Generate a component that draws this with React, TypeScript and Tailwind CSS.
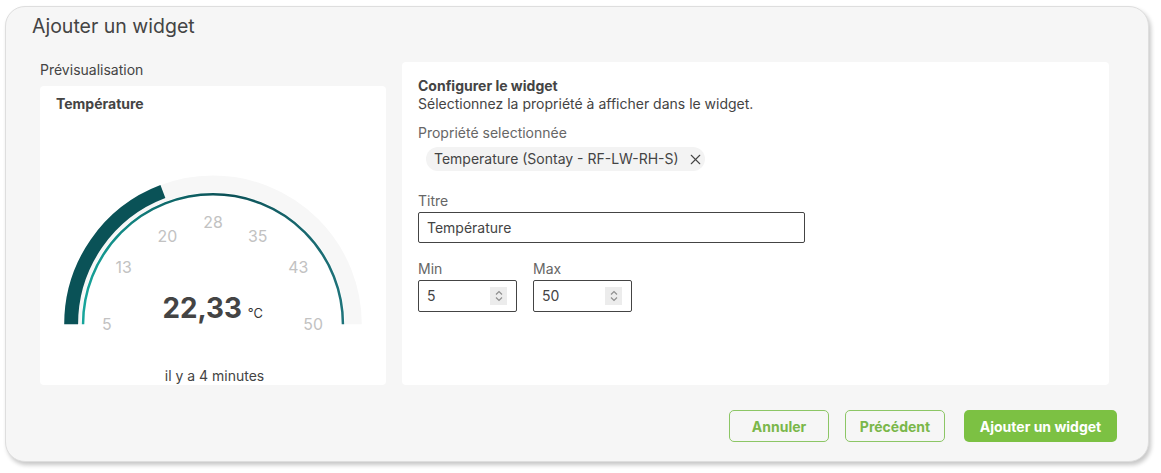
import { X } from 'lucide-react';

const MIN = 5;
const MAX = 50;
const VALUE = 22.33;

// gauge centre in svg coordinates
const CX = 173;
const CY = 213;

function arcPath(r: number, fromDeg: number, toDeg: number) {
  const a0 = (fromDeg * Math.PI) / 180;
  const a1 = (toDeg * Math.PI) / 180;
  const x0 = CX + r * Math.cos(a0);
  const y0 = CY - r * Math.sin(a0);
  const x1 = CX + r * Math.cos(a1);
  const y1 = CY - r * Math.sin(a1);
  const large = Math.abs(fromDeg - toDeg) > 180 ? 1 : 0;
  return `M ${x0} ${y0} A ${r} ${r} 0 ${large} 1 ${x1} ${y1}`;
}

const ticks = [
  { v: '5', x: 66, y: 213 },
  { v: '13', x: 83, y: 156 },
  { v: '20', x: 127, y: 124 },
  { v: '28', x: 173, y: 110 },
  { v: '35', x: 218, y: 124 },
  { v: '43', x: 259, y: 156 },
  { v: '50', x: 274, y: 213 },
];

function Gauge() {
  const frac = (VALUE - MIN) / (MAX - MIN);
  const end = 180 - frac * 180;
  return (
    <svg width={346} height={250} viewBox="0 0 346 250" className="block">
      <defs>
        <linearGradient id="thin" gradientUnits="userSpaceOnUse" x1="40" y1="0" x2="306" y2="0">
          <stop offset="0" stopColor="#17a69c" />
          <stop offset="0.3" stopColor="#0f6d6e" />
          <stop offset="0.55" stopColor="#0b5056" />
          <stop offset="1" stopColor="#1f747b" />
        </linearGradient>
      </defs>
      <path d={arcPath(141.5, 180, 0)} fill="none" stroke="#f7f7f7" strokeWidth={17} />
      <path d={arcPath(143, 180, end)} fill="none" stroke="#0a5257" strokeWidth={14} />
      <path d={arcPath(131, 180, 0)} fill="none" stroke="url(#thin)" strokeWidth={2.5} />
      {ticks.map((t) => (
        <text
          key={t.v}
          x={t.x}
          y={t.y}
          textAnchor="middle"
          dominantBaseline="central"
          fill="#c2c2c2"
          fontSize={16}
          fontFamily="Inter, sans-serif"
        >
          {t.v}
        </text>
      ))}
      <text x={122} y={207} fill="#444" fontSize={28} fontWeight={700} fontFamily="Inter, sans-serif">
        22,33
      </text>
      <text x={208} y={207} fill="#333" fontSize={13} fontFamily="Inter, sans-serif">
        °C
      </text>
    </svg>
  );
}

function NumberInput({ value }: { value: string }) {
  return (
    <div className="flex h-[32px] w-[99px] items-center justify-between rounded-[2px] border border-[#444] pl-[8px] pr-[9px]">
      <span>{value}</span>
      <div className="flex h-[18px] w-[17px] flex-col items-center justify-center bg-[#ececec]">
        <svg width="8" height="12" viewBox="0 0 8 12" fill="none" stroke="#8f8f8f" strokeWidth="1.2">
          <path d="M1 4.5 L4 1.5 L7 4.5" />
          <path d="M1 7.5 L4 10.5 L7 7.5" />
        </svg>
      </div>
    </div>
  );
}

export default function App() {
  return (
    <div className="min-h-screen bg-white pl-[5px] pt-[6px] font-['Inter',sans-serif] text-[14px] text-[#444]">
      <div className="flex h-[456px] w-[1144px] flex-col rounded-[20px] border border-[#dedede] bg-[#f6f6f6] shadow-[2px_3px_4px_rgba(0,0,0,0.22)]">
        <div className="h-[55px] pl-[26px] pt-[5px] text-[19.5px] leading-[28px] text-[#444]">Ajouter un widget</div>

        <div className="flex h-[323px] gap-[16px] pl-[34px]">
          <div className="flex w-[346px] flex-col">
            <div className="h-[24px] leading-[16px] text-[#444]">Prévisualisation</div>
            <div className="flex h-[299px] flex-col rounded-[4px] bg-white">
              <div className="pl-[16px] pt-[9px] font-bold leading-[18px] text-[#444]">Température</div>
              <Gauge />
              <div className="mt-[6px] pl-[3px] text-center leading-[18px] text-[#444]">il y a 4 minutes</div>
            </div>
          </div>

          <div className="flex h-[323px] w-[707px] flex-col rounded-[4px] bg-white pl-[16px] pt-[15px] leading-[18px]">
            <div className="font-bold text-[#444]">Configurer le widget</div>
            <div className="text-[#444]">Sélectionnez la propriété à afficher dans le widget.</div>
            <div className="mt-[11px] text-[#666]">Propriété selectionnée</div>
            <div className="ml-[8px] mt-[5px] flex h-[24px] w-[279px] items-center gap-[8px] rounded-full bg-[#f3f3f3] pl-[8px] text-[#444]">
              <span>Temperature (Sontay - RF-LW-RH-S)</span>
              <X size={17} strokeWidth={1.5} className="text-[#444]" />
            </div>
            <div className="mt-[21px] text-[#666]">Titre</div>
            <div className="mt-[2px] flex h-[31px] w-[387px] items-center rounded-[2px] border border-[#444] pl-[8px] text-[#444]">
              Température
            </div>
            <div className="mt-[17px] flex gap-[16px]">
              <div className="flex flex-col">
                <div className="text-[#666]">Min</div>
                <div className="mt-[2px]">
                  <NumberInput value="5" />
                </div>
              </div>
              <div className="flex flex-col">
                <div className="text-[#666]">Max</div>
                <div className="mt-[2px]">
                  <NumberInput value="50" />
                </div>
              </div>
            </div>
          </div>
        </div>

        <div className="mt-[25px] flex justify-end gap-[16px] pr-[31px]">
          <button className="h-[32px] w-[100px] rounded-[5px] border border-[#8cc665] bg-transparent font-bold text-[#7ab74a]">
            Annuler
          </button>
          <button className="mr-[3px] h-[32px] w-[100px] rounded-[5px] border border-[#8cc665] bg-transparent font-bold text-[#7ab74a]">
            Précédent
          </button>
          <button className="h-[32px] w-[153px] rounded-[5px] bg-[#7cc143] font-bold text-white">Ajouter un widget</button>
        </div>
      </div>
    </div>
  );
}
